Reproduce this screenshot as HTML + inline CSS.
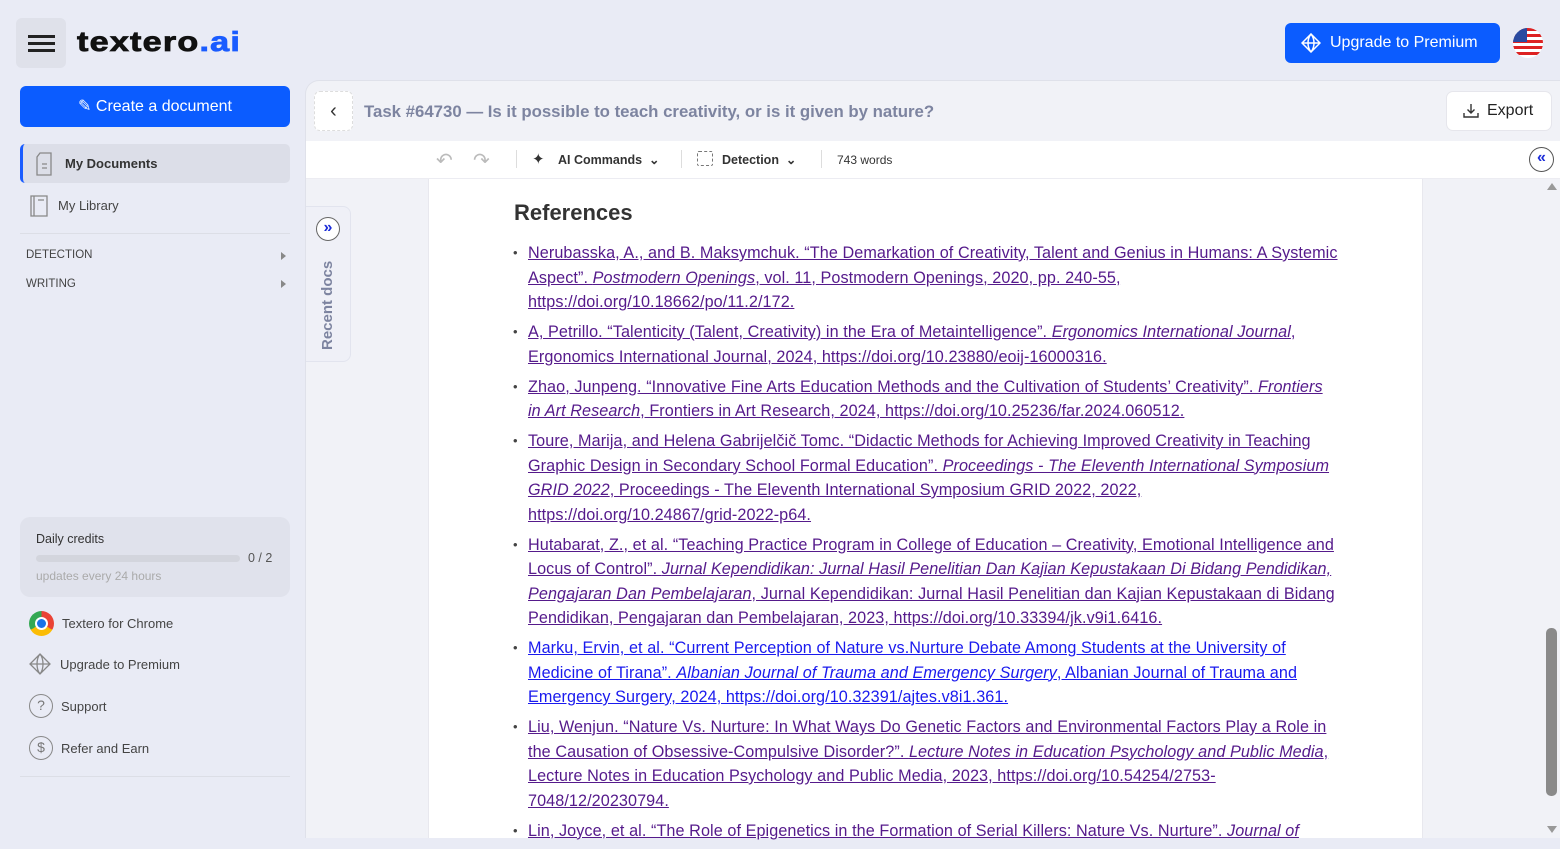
<!DOCTYPE html>
<html><head><meta charset="utf-8"><style>
*{box-sizing:border-box;margin:0;padding:0}
body{width:1560px;height:838px;overflow:hidden;background:#e9ebf5;font-family:"Liberation Sans",sans-serif;position:relative;color:#333}
.abs{position:absolute}
.menu{left:16px;top:18px;width:50px;height:50px;background:#dfe1ea;border-radius:6px}
.menu i{position:absolute;left:12px;width:27px;height:2.5px;background:#222}
.logo{left:77px;top:26px;font-size:28px;font-weight:900;color:#111;letter-spacing:1px;transform:scaleX(1.22);transform-origin:0 0;-webkit-text-stroke:0.8px #111}
.logo span{color:#1a5cff;-webkit-text-stroke:0.8px #1a5cff}
.create{left:20px;top:86px;width:270px;height:41px;background:#0b5cff;border-radius:6px;color:#fff;font-size:16px;text-align:center;line-height:41px}
.mydocs{left:20px;top:144px;width:270px;height:39px;background:#dcdee8;border-radius:5px;border-left:3px solid #1a5cff;font-size:13px;font-weight:bold;color:#333;line-height:39px;padding-left:42px}
.item{font-size:13px;color:#444}
.sec{font-size:11.5px;color:#444;left:26px}
.tri{width:0;height:0;border-left:5px solid #888;border-top:4px solid transparent;border-bottom:4px solid transparent}
.hr{height:1px;background:#dcdee6;left:20px;width:270px}
.credits{left:20px;top:517px;width:270px;height:80px;background:#e0e2ec;border-radius:10px}
.main{left:305px;top:80px;width:1255px;height:758px;background:#f1f2f7;border-radius:14px 0 0 0;border:1px solid #dfe1ea;border-right:none;border-bottom:none}
.toolbar{left:306px;top:141px;width:1254px;height:38px;background:#fff;border-bottom:1px solid #ececf2}
.page{left:428px;top:179px;width:995px;height:659px;background:#fff;border-left:1px solid #e8e8ee;border-right:1px solid #e8e8ee}
ul{list-style:none;position:absolute;left:513px;top:241px;width:840px}
li{position:relative;padding-left:15px;font-size:16.2px;line-height:24.5px;margin-bottom:5.5px;color:#551a8b;white-space:nowrap;letter-spacing:0.08px}
li:before{content:"•";position:absolute;left:0;top:0;color:#444;font-size:13px}
li u{text-decoration:underline}
li.b{color:#1a1aee}
</style></head><body>
<div class="abs menu"><i style="top:17px"></i><i style="top:24px"></i><i style="top:31px"></i></div>
<div class="abs logo">textero<span>.ai</span></div>
<div class="abs" style="left:1285px;top:23px;width:215px;height:40px;background:#0b5cff;border-radius:6px;color:#fff;font-size:16px;line-height:40px;padding-left:45px">Upgrade to Premium
<svg class="abs" style="left:16px;top:10px" width="20" height="20" viewBox="0 0 20 20" fill="none" stroke="#fff" stroke-width="1.5"><path d="M10 1L19 10L10 19L1 10Z M1 10H19 M10 1C6 6 6 14 10 19 M10 1C14 6 14 14 10 19"/></svg></div>
<div class="abs" style="left:1513px;top:28px;width:30px;height:30px;border-radius:50%;overflow:hidden;background:repeating-linear-gradient(#d22 0 3px,#fff 3px 6px)"><div style="width:14px;height:14px;background:#2a4aa0"></div></div>

<div class="abs create">✎ Create a document</div>
<div class="abs mydocs">My Documents</div>
<svg class="abs" style="left:34px;top:152px" width="20" height="24" viewBox="0 0 20 24" fill="none" stroke="#888" stroke-width="1.3"><path d="M6 1H17V23H3V5Z M8 12H13 M8 16H13"/></svg>
<svg class="abs" style="left:29px;top:194px" width="20" height="24" viewBox="0 0 20 24" fill="none" stroke="#888" stroke-width="1.3"><path d="M2 2H18V22H2Z M5 2V22 M9 6H15"/></svg>
<div class="abs item" style="left:58px;top:198px">My Library</div>
<div class="abs hr" style="top:233px"></div>
<div class="abs sec" style="top:249px">DETECTION</div><div class="abs tri" style="left:281px;top:252px"></div>
<div class="abs sec" style="top:278px">WRITING</div><div class="abs tri" style="left:281px;top:280px"></div>
<div class="abs credits">
<div class="abs" style="left:16px;top:15px;font-size:12.5px;color:#333">Daily credits</div>
<div class="abs" style="left:16px;top:38px;width:204px;height:7px;background:#d3d5dd;border-radius:4px"></div>
<div class="abs" style="left:228px;top:34px;font-size:12.5px;color:#555">0 / 2</div>
<div class="abs" style="left:16px;top:52px;font-size:12px;color:#aaa">updates every 24 hours</div>
</div>
<div class="abs" style="left:29px;top:611px;width:25px;height:25px;border-radius:50%;background:conic-gradient(#ea4335 0 120deg,#fbbc05 120deg 240deg,#34a853 240deg)"><div style="margin:6px;width:13px;height:13px;border-radius:50%;background:#1a73e8;border:2px solid #fff"></div></div>
<div class="abs item" style="left:62px;top:616px">Textero for Chrome</div>
<svg class="abs" style="left:29px;top:653px" width="22" height="22" viewBox="0 0 22 22" fill="none" stroke="#888" stroke-width="1.3"><path d="M11 1L21 11L11 21L1 11Z M1 11H21 M11 1C7 6 7 16 11 21 M11 1C15 6 15 16 11 21"/></svg>
<div class="abs item" style="left:60px;top:657px">Upgrade to Premium</div>
<div class="abs" style="left:29px;top:694px;width:24px;height:24px;border:1.5px solid #888;border-radius:50%;text-align:center;line-height:21px;font-size:14px;color:#777">?</div>
<div class="abs item" style="left:61px;top:699px">Support</div>
<div class="abs" style="left:29px;top:736px;width:24px;height:24px;border:1.5px solid #888;border-radius:50%;text-align:center;line-height:21px;font-size:14px;color:#777">$</div>
<div class="abs item" style="left:61px;top:741px">Refer and Earn</div>
<div class="abs hr" style="top:776px"></div>

<div class="abs main"></div>
<div class="abs" style="left:314px;top:91px;width:39px;height:40px;background:#fff;border:1px dashed #ddd;border-radius:6px;text-align:center;line-height:38px;font-size:20px;color:#333">&#x2039;</div>
<div class="abs" style="left:364px;top:102px;font-size:16.8px;font-weight:bold;color:#7d84a0">Task #64730 — Is it possible to teach creativity, or is it given by nature?</div>
<div class="abs" style="left:1446px;top:91px;width:106px;height:40px;background:#fff;border-radius:7px;border:1px solid #e6e6ec;font-size:16px;line-height:38px;padding-left:40px;color:#222">Export
<svg class="abs" style="left:16px;top:11px" width="16" height="16" viewBox="0 0 16 16" fill="none" stroke="#333" stroke-width="1.4"><path d="M8 1V10 M4.5 6.5L8 10L11.5 6.5 M1 10V14H15V10"/></svg></div>
<div class="abs toolbar"></div>
<div class="abs" style="left:436px;top:148px;font-size:20px;color:#bbb">↶</div>
<div class="abs" style="left:473px;top:148px;font-size:20px;color:#bbb">↷</div>
<div class="abs" style="left:516px;top:150px;width:1px;height:18px;background:#ddd"></div>
<div class="abs" style="left:532px;top:150px;font-size:15px;color:#333">✦</div>
<div class="abs" style="left:558px;top:152px;font-size:12.5px;font-weight:bold;color:#333">AI Commands &nbsp;⌄</div>
<div class="abs" style="left:681px;top:150px;width:1px;height:18px;background:#ddd"></div>
<div class="abs" style="left:697px;top:151px;width:16px;height:15px;border:1.4px dashed #777;border-radius:2px"></div>
<div class="abs" style="left:722px;top:152px;font-size:12.5px;font-weight:bold;color:#333">Detection &nbsp;⌄</div>
<div class="abs" style="left:821px;top:150px;width:1px;height:18px;background:#ddd"></div>
<div class="abs" style="left:837px;top:153px;font-size:12px;color:#333">743 words</div>
<div class="abs" style="left:1529px;top:147px;width:25px;height:25px;border:1.5px solid #555;border-radius:50%;color:#1a2bd8;font-weight:bold;font-size:16px;text-align:center;line-height:20px">«</div>

<div class="abs" style="left:306px;top:206px;width:45px;height:156px;background:#eff0f7;border:1px solid #e2e4ee;border-left:none;border-radius:0 8px 8px 0"></div>
<div class="abs" style="left:316px;top:217px;width:24px;height:24px;border:1.5px solid #666;border-radius:50%;background:#fff;color:#1a2bd8;font-weight:bold;font-size:16px;text-align:center;line-height:19px">»</div>
<div class="abs" style="left:316px;top:350px;transform:rotate(-90deg);transform-origin:0 0;font-size:15px;font-weight:bold;color:#7d84a0;white-space:nowrap;line-height:24px">Recent docs</div>

<div class="abs page"></div>
<div class="abs" style="left:1546px;top:628px;width:11px;height:168px;background:#8a8a8a;border-radius:5px"></div>
<div class="abs" style="left:1547px;top:183px;border-bottom:7px solid #999;border-left:5px solid transparent;border-right:5px solid transparent"></div>
<div class="abs" style="left:1547px;top:826px;border-top:7px solid #999;border-left:5px solid transparent;border-right:5px solid transparent"></div>

<div class="abs" style="left:514px;top:200px;font-size:22px;font-weight:bold;color:#333">References</div>
<ul>
<li><u>Nerubasska, A., and B. Maksymchuk. “The Demarkation of Creativity, Talent and Genius in Humans: A Systemic </u><br><u>Aspect”. <i>Postmodern Openings</i>, vol. 11, Postmodern Openings, 2020, pp. 240-55, </u><br><u>https://doi.org/10.18662/po/11.2/172.</u></li>
<li><u>A, Petrillo. “Talenticity (Talent, Creativity) in the Era of Metaintelligence”. <i>Ergonomics International Journal</i>, </u><br><u>Ergonomics International Journal, 2024, https://doi.org/10.23880/eoij-16000316.</u></li>
<li><u>Zhao, Junpeng. “Innovative Fine Arts Education Methods and the Cultivation of Students’ Creativity”. <i>Frontiers</i></u><br><u><i>in Art Research</i>, Frontiers in Art Research, 2024, https://doi.org/10.25236/far.2024.060512.</u></li>
<li><u>Toure, Marija, and Helena Gabrijelčič Tomc. “Didactic Methods for Achieving Improved Creativity in Teaching </u><br><u>Graphic Design in Secondary School Formal Education”. <i>Proceedings - The Eleventh International Symposium</i></u><br><u><i>GRID 2022</i>, Proceedings - The Eleventh International Symposium GRID 2022, 2022, </u><br><u>https://doi.org/10.24867/grid-2022-p64.</u></li>
<li><u>Hutabarat, Z., et al. “Teaching Practice Program in College of Education – Creativity, Emotional Intelligence and</u><br><u>Locus of Control”. <i>Jurnal Kependidikan: Jurnal Hasil Penelitian Dan Kajian Kepustakaan Di Bidang Pendidikan,</i></u><br><u><i>Pengajaran Dan Pembelajaran</i>, Jurnal Kependidikan: Jurnal Hasil Penelitian dan Kajian Kepustakaan di Bidang </u><br><u>Pendidikan, Pengajaran dan Pembelajaran, 2023, https://doi.org/10.33394/jk.v9i1.6416.</u></li>
<li class="b"><u>Marku, Ervin, et al. “Current Perception of Nature vs.Nurture Debate Among Students at the University of </u><br><u>Medicine of Tirana”. <i>Albanian Journal of Trauma and Emergency Surgery</i>, Albanian Journal of Trauma and </u><br><u>Emergency Surgery, 2024, https://doi.org/10.32391/ajtes.v8i1.361.</u></li>
<li><u>Liu, Wenjun. “Nature Vs. Nurture: In What Ways Do Genetic Factors and Environmental Factors Play a Role in </u><br><u>the Causation of Obsessive-Compulsive Disorder?”. <i>Lecture Notes in Education Psychology and Public Media</i>, </u><br><u>Lecture Notes in Education Psychology and Public Media, 2023, https://doi.org/10.54254/2753-</u><br><u>7048/12/20230794.</u></li>
<li><u>Lin, Joyce, et al. “The Role of Epigenetics in the Formation of Serial Killers: Nature Vs. Nurture”. <i>Journal of</i></u></li>
</ul>
</body></html>
